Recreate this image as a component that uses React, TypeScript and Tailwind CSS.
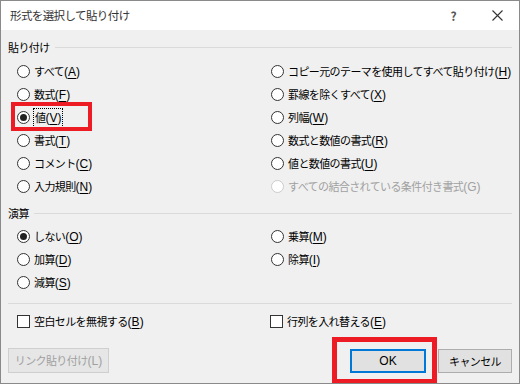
import type { ReactNode } from 'react'

interface OptionProps {
  label: ReactNode
  checked?: boolean
  disabled?: boolean
  focused?: boolean
}

// accelerator key in parentheses, latin glyphs a bit wider than the CJK font's
function Key({ k, plain }: { k: string; plain?: boolean }): React.JSX.Element {
  return (
    <span className="font-['Liberation_Sans',sans-serif] text-[12px] tracking-normal">
      ({plain ? k : <span className="underline underline-offset-2">{k}</span>})
    </span>
  )
}

function Radio({ label, checked, disabled, focused }: OptionProps): React.JSX.Element {
  return (
    <div
      className={`flex h-[23px] items-center gap-[4px] whitespace-nowrap ${disabled ? 'text-[#a0a0a0]' : 'text-black'}`}
    >
      <span
        className={`flex size-[13px] shrink-0 items-center justify-center rounded-full border bg-white ${
          disabled ? 'border-[#cccccc]' : 'border-[#333333]'
        }`}
      >
        {checked && <span className="size-[7px] rounded-full bg-[#222]" />}
      </span>
      <span className={focused ? 'px-[1px] outline-1 outline-dotted outline-black' : ''}>{label}</span>
    </div>
  )
}

function Check({ label }: { label: ReactNode }): React.JSX.Element {
  return (
    <div className="flex h-[17px] items-center gap-[4px] whitespace-nowrap">
      <span className="size-[13px] shrink-0 border border-[#333333] bg-white" />
      <span>{label}</span>
    </div>
  )
}

function GroupHeader({ title }: { title: string }): React.JSX.Element {
  return (
    <div className="flex h-[16px] items-center gap-[5px]">
      <span>{title}</span>
      <span className="h-px flex-1 bg-[#dadada]" />
    </div>
  )
}

function App(): React.JSX.Element {
  return (
    <div className="h-[384px] w-[520px] overflow-hidden border border-[#8a8a8a] bg-[#f0f0f0] font-['Noto_Sans_CJK_JP',sans-serif] text-[11px] tracking-[-0.6px] text-black">
      <div className="flex h-[29px] items-center bg-white pl-[9px] pr-[16px] text-[11.5px] text-[#333]">
        <span>形式を選択して貼り付け</span>
        <span className="ml-auto mr-[36px] text-[12px] font-bold text-[#555]">?</span>
        <svg width="11" height="11" viewBox="0 0 11 11" className="text-[#333]">
          <path d="M0.5 0.5L10.5 10.5M10.5 0.5L0.5 10.5" stroke="currentColor" strokeWidth="1.1" />
        </svg>
      </div>

      <div className="px-[7px]">
        <div className="mt-[9px]">
          <GroupHeader title="貼り付け" />
        </div>
        <div className="mt-[5px] grid grid-cols-[254px_1fr] pl-[9px]">
          <div className="flex flex-col">
            <Radio label={<>すべて<Key k="A" /></>} />
            <Radio label={<>数式<Key k="F" /></>} />
            <div className="relative">
              <Radio label={<>値<Key k="V" /></>} checked focused />
              <span className="absolute -left-[6px] -top-[4px] h-[29px] w-[81px] border-[4px] border-[#ed1c24]" />
            </div>
            <Radio label={<>書式<Key k="T" /></>} />
            <Radio label={<>コメント<Key k="C" /></>} />
            <Radio label={<>入力規則<Key k="N" /></>} />
          </div>
          <div className="flex flex-col">
            <Radio label={<>コピー元のテーマを使用してすべて貼り付け<Key k="H" /></>} />
            <Radio label={<>罫線を除くすべて<Key k="X" /></>} />
            <Radio label={<>列幅<Key k="W" /></>} />
            <Radio label={<>数式と数値の書式<Key k="R" /></>} />
            <Radio label={<>値と数値の書式<Key k="U" /></>} />
            <Radio label={<>すべての結合されている条件付き書式<Key k="G" plain /></>} disabled />
          </div>
        </div>

        <div className="mt-[7px]">
          <GroupHeader title="演算" />
        </div>
        <div className="mt-[4px] grid grid-cols-[254px_1fr] pl-[9px]">
          <div className="flex flex-col">
            <Radio label={<>しない<Key k="O" /></>} checked />
            <Radio label={<>加算<Key k="D" /></>} />
            <Radio label={<>減算<Key k="S" /></>} />
          </div>
          <div className="flex flex-col">
            <Radio label={<>乗算<Key k="M" /></>} />
            <Radio label={<>除算<Key k="I" /></>} />
          </div>
        </div>

        <div className="mt-[9px] h-px bg-[#dadada]" />

        <div className="mt-[9px] grid grid-cols-[253px_1fr] pl-[9px]">
          <Check label={<>空白セルを無視する<Key k="B" /></>} />
          <Check label={<>行列を入れ替える<Key k="E" /></>} />
        </div>

        <div className="mt-[18px] flex items-start">
          <button className="h-[25px] w-[101px] whitespace-nowrap border border-[#cfcfcf] bg-[#e6e6e6] text-[#a0a0a0]">
            リンク貼り付け<Key k="L" plain />
          </button>
          <div className="relative ml-auto mt-[1px]">
            <button className="h-[24px] w-[76px] border-2 border-[#0078d7] bg-[#e1e1e1] font-['Liberation_Sans',sans-serif] text-[12px] tracking-normal text-black">
              OK
            </button>
            <span className="absolute -left-[18px] -top-[12px] h-[47px] w-[105px] border-[5px] border-[#ed1c24]" />
          </div>
          <button className="mt-[1px] ml-[12px] h-[24px] w-[74px] border border-[#adadad] bg-[#e1e1e1] text-black">
            キャンセル
          </button>
        </div>
      </div>
    </div>
  )
}

export default App
